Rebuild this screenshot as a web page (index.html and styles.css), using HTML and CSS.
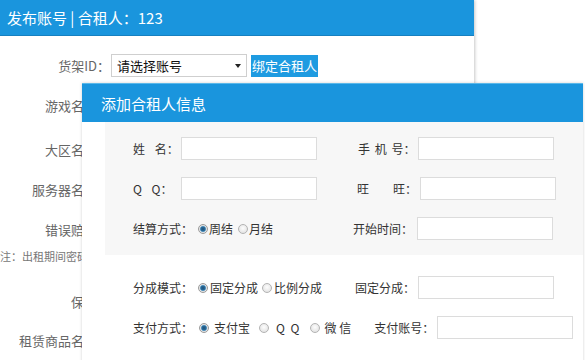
FILE: index.html
```html
<!DOCTYPE html>
<html lang="zh-CN">
<head>
<meta charset="utf-8">
<title>发布账号</title>
<link rel="stylesheet" href="styles.css">
</head>
<body>
<div class="page">
  <div class="panel">
    <div class="panel-head">发布账号 | 合租人：123</div>
    <div class="panel-body">
      <div class="brow">
        <span class="blabel">货架ID：</span>
        <div class="select"><span>请选择账号</span><span class="caret"></span></div>
        <button class="bind">绑定合租人</button>
      </div>
      <div class="brow"><span class="blabel">游戏名称：</span></div>
      <div class="brow mt21"><span class="blabel">大区名称：</span></div>
      <div class="brow"><span class="blabel">服务器名称：</span></div>
      <div class="brow"><span class="blabel">错误赔偿：</span></div>
      <div class="note">备注：出租期间密码请勿修改</div>
      <div class="brow mt27"><span class="blabel">保险：</span></div>
      <div class="brow mt16"><span class="blabel">租赁商品名称：</span></div>
    </div>
  </div>

  <div class="modal">
    <div class="modal-head">添加合租人信息</div>
    <div class="modal-grey">
      <div class="mrow">
        <span class="mlab w48 ws7">姓 名：</span><span class="inp"></span>
        <span class="mlab l2 ml41 ws2">手 机 号：</span><span class="inp"></span>
      </div>
      <div class="mrow">
        <span class="mlab w48 ws7">Q Q：</span><span class="inp"></span>
        <span class="mlab l2 ml40">旺&emsp;&emsp;旺：</span><span class="inp"></span>
      </div>
      <div class="mrow">
        <div class="group g184">
          <span class="mlab">结算方式：</span>
          <span class="radio on r1"></span><span class="rtext">周结</span>
          <span class="radio r2"></span><span class="rtext">月结</span>
        </div>
        <span class="mlab l4 ml36">开始时间：</span><span class="inp"></span>
      </div>
    </div>
    <div class="modal-white">
      <div class="mrow">
        <div class="group">
          <span class="mlab">分成模式：</span>
          <span class="radio on r1"></span><span class="rtext t2">固定分成</span>
          <span class="radio r3"></span><span class="rtext t2">比例分成</span>
        </div>
        <span class="mlab l2 ml33">固定分成：</span><span class="inp"></span>
      </div>
      <div class="mrow">
        <div class="group">
          <span class="mlab">支付方式：</span>
          <span class="radio on r4"></span><span class="rtext t4">支付宝</span>
          <span class="radio r5"></span><span class="rtext t5 ws3">Q Q</span>
          <span class="radio r6"></span><span class="rtext t4">微 信</span>
        </div>
        <span class="mlab l2 ml23">支付账号：</span><span class="inp"></span>
      </div>
    </div>
  </div>
</div>
</body>
</html>
```

FILE: styles.css
```css
html, body {
  margin: 0;
  padding: 0;
  background: #fff;
}
body {
  width: 585px;
  height: 360px;
  overflow: hidden;
  font-family: "Noto Sans CJK SC", "Microsoft YaHei", sans-serif;
}
.page {
  position: relative;
  width: 585px;
  height: 360px;
}
.panel {
  width: 474px;
  height: 360px;
  background: #fff;
  box-shadow: 1px 0 3px rgba(0, 0, 0, 0.22);
}
.panel-head {
  height: 36px;
  line-height: 36px;
  background: #1a95dd;
  border-bottom: 1px solid #1780c0;
  box-sizing: border-box;
  color: #fff;
  font-size: 15px;
  padding-left: 7px;
}
.panel-body {
  display: flex;
  flex-direction: column;
  padding-top: 18px;
}
.brow {
  display: flex;
  align-items: center;
  height: 23px;
  margin-top: 17px;
}
.brow:first-child { margin-top: 0; }
.brow.mt21 { margin-top: 21px; }
.brow.mt27 { margin-top: 27px; }
.brow.mt16 { margin-top: 16px; }
.blabel {
  width: 110px;
  text-align: right;
  font-size: 13px;
  color: #666;
  line-height: 23px;
  flex: none;
}
.select {
  width: 136px;
  height: 23px;
  box-sizing: border-box;
  border: 1px solid #cfcfcf;
  display: flex;
  align-items: center;
  justify-content: space-between;
  padding: 0 5px 0 5px;
  font-size: 13px;
  color: #111;
  line-height: 21px;
  margin-left: 1px;
}
.caret {
  width: 0;
  height: 0;
  border-left: 3.5px solid transparent;
  border-right: 3.5px solid transparent;
  border-top: 4px solid #222;
}
.bind {
  margin-left: 4px;
  height: 22px;
  padding: 0 1px;
  border: none;
  background: #1e9be1;
  color: #fff;
  font-family: inherit;
  font-size: 13px;
  line-height: 22px;
}
.note {
  margin-top: 8px;
  margin-left: -11px;
  height: 14px;
  line-height: 14px;
  font-size: 11px;
  color: #777;
  white-space: nowrap;
}

.modal {
  position: absolute;
  left: 82px;
  top: 83px;
  width: 501px;
  height: 290px;
  background: #fff;
  box-shadow: 0 0 3px rgba(0, 0, 0, 0.18);
}
.modal-head {
  height: 39px;
  line-height: 39px;
  background: #1a95dd;
  border-top: 1px solid #5ab8ea;
  box-sizing: border-box;
  color: #fff;
  font-size: 15px;
  padding-left: 19px;
}
.modal-grey {
  margin-left: 23px;
  background: #f7f7f7;
  padding: 15px 0 15px 28px;
  display: flex;
  flex-direction: column;
  gap: 17px;
}
.modal-white {
  padding: 21px 0 0 51px;
  display: flex;
  flex-direction: column;
  gap: 17px;
}
.mrow {
  display: flex;
  align-items: center;
  height: 23px;
}
.group {
  display: flex;
  align-items: center;
  flex: none;
}
.g184 { width: 184px; }
.mlab {
  font-size: 12px;
  color: #333;
  line-height: 23px;
  white-space: nowrap;
  flex: none;
}
.w48 { width: 48px; }
.ws7 { word-spacing: 7px; }
.ws2 { word-spacing: 2px; }
.ws3 { word-spacing: 3px; }
.l2 { margin-right: 3px; }
.l4 { margin-right: 4px; }
.ml41 { margin-left: 41px; }
.ml40 { margin-left: 40px; }
.ml36 { margin-left: 36px; }
.ml33 { margin-left: 33px; }
.ml23 { margin-left: 23px; }
.inp {
  width: 136px;
  height: 23px;
  box-sizing: border-box;
  border: 1px solid #dcdcdc;
  background: #fff;
  flex: none;
}
.radio {
  width: 10px;
  height: 10px;
  box-sizing: border-box;
  border-radius: 50%;
  border: 1px solid #b3b3b3;
  background: radial-gradient(circle at 50% 40%, #fdfdfd 0, #dcdcdc 100%);
  flex: none;
}
.radio.on {
  border-color: #9a9a9a;
  background: radial-gradient(circle, #1d4f78 0, #2c6e9c 2.2px, #6fa8cf 2.8px, #e4e4e4 3.4px);
}
.r1 { margin-left: 5px; }
.r2 { margin-left: 5px; }
.r3 { margin-left: 4px; }
.r4 { margin-left: 6px; }
.r5 { margin-left: 9px; }
.r6 { margin-left: 10px; }
.rtext {
  font-size: 12px;
  color: #333;
  line-height: 23px;
  margin-left: 1px;
  white-space: nowrap;
}
.t2 { margin-left: 2px; }
.t4 { margin-left: 5px; }
.t5 { margin-left: 7px; }
```
